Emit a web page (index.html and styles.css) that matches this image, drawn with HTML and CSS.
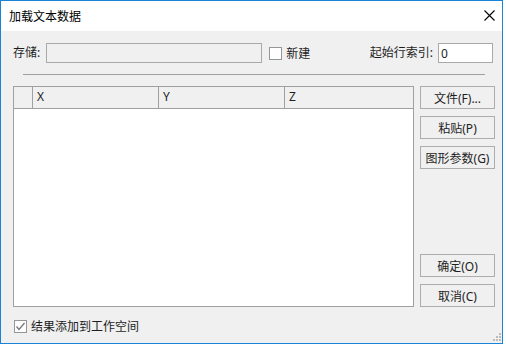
FILE: index.html
```html
<!DOCTYPE html>
<html lang="zh-CN">
<head>
    <meta charset="UTF-8">
    <meta name="viewport" content="width=device-width, initial-scale=1.0">
    <title>加载文本数据</title>
    <link rel="stylesheet" href="styles.css">
</head>
<body>
    <div class="window">
        <div class="titlebar">
            <span class="title">加载文本数据</span>
            <button class="close-button" type="button">
                <svg width="11" height="11" viewBox="0 0 11 11">
                    <path d="M0.5 0.5 L10.5 10.5 M10.5 0.5 L0.5 10.5" stroke="#000" stroke-width="1.1" fill="none"/>
                </svg>
            </button>
        </div>

        <div class="content">
            <div class="top-row">
                <label class="label store-label">存储:</label>
                <input class="text-input store-input" type="text" disabled>
                <span class="checkbox"></span>
                <span class="check-text">新建</span>
                <label class="label start-label">起始行索引:</label>
                <input class="text-input start-input" type="text" value="0">
            </div>

            <div class="separator"></div>

            <div class="main">
                <div class="grid">
                    <div class="grid-head">
                        <div class="cell corner"></div>
                        <div class="cell">X</div>
                        <div class="cell">Y</div>
                        <div class="cell last">Z</div>
                    </div>
                    <div class="grid-body"></div>
                </div>

                <div class="buttons">
                    <button class="dlg-button" type="button">文件(F)...</button>
                    <button class="dlg-button" type="button">粘贴(P)</button>
                    <button class="dlg-button" type="button">图形参数(G)</button>
                    <div class="spacer"></div>
                    <button class="dlg-button" type="button">确定(O)</button>
                    <button class="dlg-button" type="button">取消(C)</button>
                </div>
            </div>

            <div class="bottom-row">
                <span class="checkbox checked">
                    <svg width="11" height="11" viewBox="0 0 11 11">
                        <path d="M1.5 5.5 L4 8.5 L9.5 2" stroke="#777" stroke-width="1.3" fill="none"/>
                    </svg>
                </span>
                <span class="check-text">结果添加到工作空间</span>
            </div>
        </div>

        <svg class="grip" width="8" height="8" viewBox="0 0 8 8">
            <rect x="6" y="0" width="2" height="2" fill="#bcbcbc"/>
            <rect x="3" y="3" width="2" height="2" fill="#bcbcbc"/>
            <rect x="6" y="3" width="2" height="2" fill="#bcbcbc"/>
            <rect x="0" y="6" width="2" height="2" fill="#bcbcbc"/>
            <rect x="3" y="6" width="2" height="2" fill="#bcbcbc"/>
            <rect x="6" y="6" width="2" height="2" fill="#bcbcbc"/>
        </svg>
    </div>
</body>
</html>
```

FILE: styles.css
```css
body {
    margin: 0;
    padding: 0;
    background: #fff;
    font-family: "Noto Sans", "Noto Sans CJK SC", sans-serif;
    font-size: 12px;
    color: #1e1e1e;
}

.window {
    width: 501px;
    height: 342px;
    border: 1px solid #1883d7;
    background: #f0f0f0;
    display: flex;
    flex-direction: column;
    position: relative;
}

.titlebar {
    height: 30px;
    background: #fff;
    display: flex;
    align-items: center;
    justify-content: space-between;
    flex-shrink: 0;
}

.title {
    margin-left: 8px;
    margin-top: -1px;
    color: #000;
}

.close-button {
    border-style: none;
    background: none;
    padding: 0;
    width: 11px;
    height: 11px;
    margin-right: 7px;
    margin-top: -1px;
    display: flex;
}

.content {
    padding: 12px 0 0 12px;
    display: flex;
    flex-direction: column;
    flex: 1;
}

.top-row {
    display: flex;
    align-items: center;
    height: 20px;
    padding-right: 9px;
}

.top-row > * {
    flex-shrink: 0;
}

.label {
    line-height: 20px;
}

.text-input {
    box-sizing: border-box;
    height: 20px;
    border: 1px solid #a9a9a9;
    background: #fff;
    font: inherit;
    color: #1e1e1e;
    padding: 0 3px;
    outline: none;
}

.store-input {
    width: 216px;
    margin-left: 6px;
    background: #f0f0f0;
}

.checkbox {
    box-sizing: border-box;
    width: 13px;
    height: 13px;
    border: 1px solid #969696;
    background: #fff;
    display: flex;
    align-items: center;
    justify-content: center;
}

.top-row .checkbox {
    margin-left: 7px;
}

.check-text {
    margin-left: 4px;
}

.start-label {
    margin-left: auto;
}

.start-input {
    width: 55px;
    margin-left: 5px;
    padding-left: 2px;
}

.separator {
    height: 1px;
    background: #a0a0a0;
    margin: 11px 0 0 10px;
    width: 462px;
}

.main {
    display: flex;
    margin-top: 11px;
    height: 221px;
}

.grid {
    box-sizing: border-box;
    width: 401px;
    height: 221px;
    border: 1px solid #a0a0a0;
    background: #fff;
    display: flex;
    flex-direction: column;
}

.grid-head {
    display: grid;
    grid-template-columns: 19px 126px 126px 1fr;
    height: 21px;
    background: #f0f0f0;
    border-bottom: 1px solid #a0a0a0;
}

.cell {
    border-right: 1px solid #a0a0a0;
    padding-left: 4px;
    line-height: 20px;
}

.cell.corner {
    padding-left: 0;
}

.cell.last {
    border-right: none;
}

.grid-body {
    flex: 1;
}

.buttons {
    display: flex;
    flex-direction: column;
    gap: 7px;
    margin-left: 6px;
}

.spacer {
    flex: 1;
}

.dlg-button {
    box-sizing: border-box;
    width: 75px;
    height: 23px;
    border: 1px solid #adadad;
    background: #f0f0f0;
    font: inherit;
    color: #1e1e1e;
    padding: 0;
    cursor: pointer;
}

.bottom-row {
    display: flex;
    align-items: center;
    margin-top: 10px;
    margin-left: 1px;
}

.checkbox.checked {
    background: #fff;
}

.grip {
    position: absolute;
    right: 1px;
    bottom: 2px;
}
```
